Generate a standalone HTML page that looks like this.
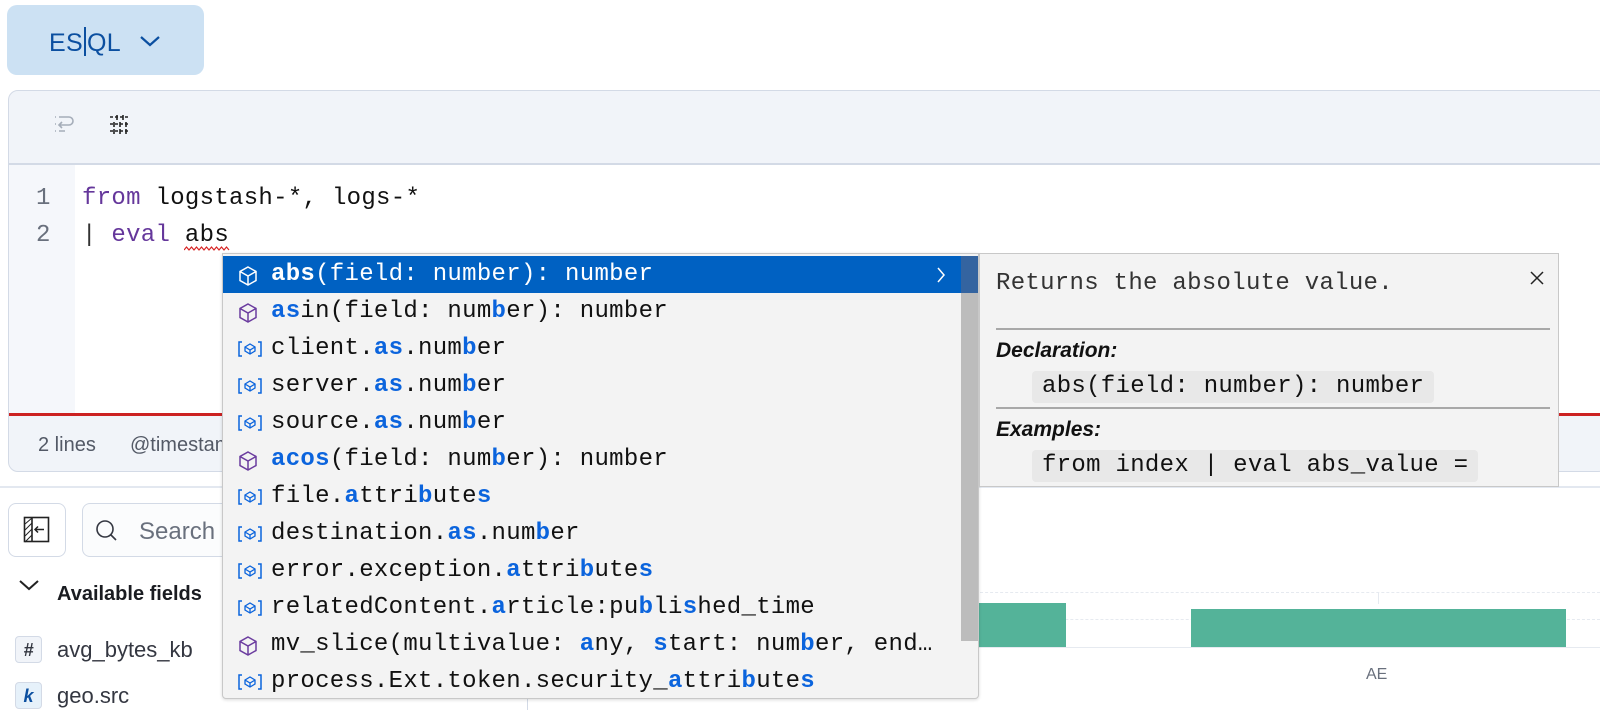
<!DOCTYPE html>
<html><head><meta charset="utf-8"><style>
*{box-sizing:border-box;margin:0;padding:0}
body{width:1600px;height:708px;overflow:hidden;background:#fff;font-family:"Liberation Sans",sans-serif;position:relative}
.abs{position:absolute}
.mono{font-family:"Liberation Mono",monospace;font-size:24px;letter-spacing:0.3px;white-space:pre}
.kw{color:#65379b}
.row{position:absolute;left:0;width:738px;height:37px;line-height:37px;color:#111}
.row .t{position:absolute;left:48px;top:0}
.row svg{position:absolute;left:14px;top:9px}
.m{color:#0b64dd;font-weight:bold}
.sel{background:#0061c2;color:#fff}
.sel .m{color:#fff}
</style></head><body>
<div class="abs" style="left:7px;top:5px;width:197px;height:70px;background:#cce1f3;border-radius:10px"></div>
<div class="abs" style="left:49px;top:27px;font-size:25px;color:#0b4fa0;letter-spacing:0.3px">ES<span style="display:inline-block;width:2px;height:29px;background:#0b4fa0;vertical-align:-5px;margin:0 1px"></span>QL</div>
<svg class="abs" style="left:138px;top:33px" width="24" height="16" viewBox="0 0 24 16"><path d="M3 4l9 8 9-8" stroke="#0b4fa0" stroke-width="2.2" fill="none"/></svg>

<div class="abs" style="left:8px;top:90px;width:1600px;height:382px;border:1px solid #d3dae6;border-radius:10px;background:#f1f4f9;overflow:hidden">
  <div class="abs" style="left:0;top:72px;width:1600px;height:2px;background:#d3dae6"></div>
  <div class="abs" style="left:0;top:74px;width:66px;height:248px;background:#f5f7fb"></div>
  <div class="abs" style="left:66px;top:74px;width:1600px;height:248px;background:#fff"></div>
  <div class="abs" style="left:0;top:322px;width:1600px;height:3px;background:#cc2222"></div>
</div>
<svg class="abs" style="left:53px;top:114px" width="24" height="20" viewBox="0 0 24 20"><path d="M2 3h1M2 10h1M2 17h1M6 3h10a4 4 0 0 1 0 8H7m2-3l-3 3 3 3M6 17h6" stroke="#a5adb9" stroke-width="1.6" fill="none"/></svg>
<svg class="abs" style="left:109px;top:114px" width="22" height="20" viewBox="0 0 22 20"><g stroke="#222" stroke-width="1.6"><path d="M1 3h20M1 10h20M1 17h20" stroke-dasharray="3 2"/><path d="M8 1v5M14 1v5M5 8v5M11 8v5M17 8v5M5 15v5M11 15v5M17 15v5"/></g></svg>
<div class="abs mono" style="left:36px;top:180px;color:#69707d;line-height:37px">1
2</div>
<div class="abs mono" style="left:82px;top:180px;line-height:37px;color:#111"><span class="kw">from</span> logstash-*, logs-*
<span style="color:#333">|</span> <span class="kw">eval</span> abs</div>
<svg class="abs" style="left:184px;top:245px" width="46" height="8" viewBox="0 0 46 8"><path d="M0 5 l2.5 -3 2.5 3 2.5 -3 2.5 3 2.5 -3 2.5 3 2.5 -3 2.5 3 2.5 -3 2.5 3 2.5 -3 2.5 3 2.5 -3 2.5 3 2.5 -3 2.5 3 2.5 -3 2.5 3" stroke="#d62222" stroke-width="1.2" fill="none"/></svg>
<div class="abs" style="left:38px;top:434px;font-size:20px;color:#535966">2 lines</div>
<div class="abs" style="left:130px;top:434px;font-size:20px;color:#535966">@timestamp</div>

<div class="abs" style="left:0;top:486px;width:1600px;height:2px;background:#e3e8f0"></div>
<div class="abs" style="left:8px;top:503px;width:58px;height:54px;border:1px solid #d3dae6;border-radius:8px;background:#fff"></div>
<svg class="abs" style="left:23px;top:516px" width="28" height="28" viewBox="0 0 28 28"><rect x="1.5" y="1.5" width="24" height="24" fill="none" stroke="#222" stroke-width="1.6"/><path d="M9 2v24" stroke="#222" stroke-width="1.6"/><path d="M2 8l7-6M2 14l7-7M2 20l7-7M2 26l7-7" stroke="#222" stroke-width="1"/><path d="M21 13.5h-9m3-3l-3 3 3 3" stroke="#222" stroke-width="1.5" fill="none"/></svg>
<div class="abs" style="left:82px;top:503px;width:200px;height:54px;border:1px solid #d3dae6;border-radius:8px;background:#fbfcfd"></div>
<svg class="abs" style="left:95px;top:519px" width="24" height="24" viewBox="0 0 24 24"><circle cx="10" cy="10" r="8" fill="none" stroke="#343741" stroke-width="1.6"/><path d="M16 16l5 5" stroke="#343741" stroke-width="1.6"/></svg>
<div class="abs" style="left:139px;top:518px;font-size:24px;color:#69707d">Search</div>
<svg class="abs" style="left:18px;top:578px" width="22" height="14" viewBox="0 0 22 14"><path d="M2 3l9 8 9-8" stroke="#222" stroke-width="2" fill="none"/></svg>
<div class="abs" style="left:57px;top:583px;font-size:20px;font-weight:bold;color:#1a1c21">Available fields</div>
<div class="abs" style="left:15px;top:636px;width:27px;height:27px;border:1px solid #d3dae6;border-radius:4px;background:#f1f4f9;font-size:18px;font-weight:bold;font-style:italic;color:#343741;text-align:center;line-height:26px">#</div>
<div class="abs" style="left:57px;top:637px;font-size:22px;color:#343741">avg_bytes_kb</div>
<div class="abs" style="left:15px;top:682px;width:27px;height:27px;border:1px solid #d3dae6;border-radius:4px;background:#e6f1fa;font-size:18px;font-weight:bold;font-style:italic;color:#0b4fa0;text-align:center;line-height:26px">k</div>
<div class="abs" style="left:57px;top:683px;font-size:22px;color:#343741">geo.src</div>
<div class="abs" style="left:527px;top:690px;width:1px;height:20px;background:#d3dae6"></div>

<div class="abs" style="left:960px;top:592px;width:640px;border-top:1px dashed #e6eaf0"></div>
<div class="abs" style="left:960px;top:619px;width:640px;border-top:1px dashed #e6eaf0"></div>
<div class="abs" style="left:960px;top:647px;width:640px;height:1px;background:#e6eaf0"></div>
<div class="abs" style="left:1378px;top:592px;width:1px;height:12px;background:#e6eaf0"></div>
<div class="abs" style="left:960px;top:603px;width:106px;height:44px;background:#54b399"></div>
<div class="abs" style="left:1191px;top:609px;width:375px;height:38px;background:#54b399"></div>
<div class="abs" style="left:1366px;top:666px;font-size:16px;color:#69707d">AE</div>

<div class="abs" style="left:222px;top:253px;width:757px;height:446px;background:#f3f3f3;border:1px solid #c8c8c8;border-radius:0 0 4px 4px;box-shadow:0 1px 3px rgba(0,0,0,.15);overflow:hidden">
  <div class="abs" style="left:738px;top:2px;width:18px;height:385px;background:#bcbcbc"></div>
  <div class="abs" style="left:738px;top:2px;width:18px;height:37px;background:#3464a0"></div>
  <div style="position:absolute;left:0;top:2px;width:738px" class="mono">
    <div class="row sel" style="top:0"><svg width="22" height="22" viewBox="0 0 22 22"><path d="M11 2l8 4.5v9L11 20l-8-4.5v-9zM3 6.5l8 4.5 8-4.5M11 11v9" fill="none" stroke="#fff" stroke-width="1.5"/></svg><span class="t"><span class="m">abs</span>(field: number): number</span><svg style="left:713px;top:11px" width="10" height="16" viewBox="0 0 10 16"><path d="M2 1l6 7-6 7" stroke="#fff" stroke-width="1.5" fill="none"/></svg></div>
    <div class="row" style="top:37px"><svg width="22" height="22" viewBox="0 0 22 22"><path d="M11 2l8 4.5v9L11 20l-8-4.5v-9zM3 6.5l8 4.5 8-4.5M11 11v9" fill="none" stroke="#6b3c9f" stroke-width="1.5"/></svg><span class="t"><span class="m">as</span>in(field: num<span class="m">b</span>er): number</span></div>
    <div class="row" style="top:74px"><svg width="26" height="20" viewBox="0 0 26 20"><path d="M5 3H2v14h3M21 3h3v14h-3" fill="none" stroke="#0b64dd" stroke-width="1.5"/><path d="M8 8l5-3 5 3v4l-5 3-5-3zM8 8l5 3 5-3M13 11v4" fill="none" stroke="#0b64dd" stroke-width="1.3"/></svg><span class="t">client.<span class="m">as</span>.num<span class="m">b</span>er</span></div>
    <div class="row" style="top:111px"><svg width="26" height="20" viewBox="0 0 26 20"><path d="M5 3H2v14h3M21 3h3v14h-3" fill="none" stroke="#0b64dd" stroke-width="1.5"/><path d="M8 8l5-3 5 3v4l-5 3-5-3zM8 8l5 3 5-3M13 11v4" fill="none" stroke="#0b64dd" stroke-width="1.3"/></svg><span class="t">server.<span class="m">as</span>.num<span class="m">b</span>er</span></div>
    <div class="row" style="top:148px"><svg width="26" height="20" viewBox="0 0 26 20"><path d="M5 3H2v14h3M21 3h3v14h-3" fill="none" stroke="#0b64dd" stroke-width="1.5"/><path d="M8 8l5-3 5 3v4l-5 3-5-3zM8 8l5 3 5-3M13 11v4" fill="none" stroke="#0b64dd" stroke-width="1.3"/></svg><span class="t">source.<span class="m">as</span>.num<span class="m">b</span>er</span></div>
    <div class="row" style="top:185px"><svg width="22" height="22" viewBox="0 0 22 22"><path d="M11 2l8 4.5v9L11 20l-8-4.5v-9zM3 6.5l8 4.5 8-4.5M11 11v9" fill="none" stroke="#6b3c9f" stroke-width="1.5"/></svg><span class="t"><span class="m">acos</span>(field: num<span class="m">b</span>er): number</span></div>
    <div class="row" style="top:222px"><svg width="26" height="20" viewBox="0 0 26 20"><path d="M5 3H2v14h3M21 3h3v14h-3" fill="none" stroke="#0b64dd" stroke-width="1.5"/><path d="M8 8l5-3 5 3v4l-5 3-5-3zM8 8l5 3 5-3M13 11v4" fill="none" stroke="#0b64dd" stroke-width="1.3"/></svg><span class="t">file.<span class="m">a</span>ttri<span class="m">b</span>ute<span class="m">s</span></span></div>
    <div class="row" style="top:259px"><svg width="26" height="20" viewBox="0 0 26 20"><path d="M5 3H2v14h3M21 3h3v14h-3" fill="none" stroke="#0b64dd" stroke-width="1.5"/><path d="M8 8l5-3 5 3v4l-5 3-5-3zM8 8l5 3 5-3M13 11v4" fill="none" stroke="#0b64dd" stroke-width="1.3"/></svg><span class="t">destination.<span class="m">as</span>.num<span class="m">b</span>er</span></div>
    <div class="row" style="top:296px"><svg width="26" height="20" viewBox="0 0 26 20"><path d="M5 3H2v14h3M21 3h3v14h-3" fill="none" stroke="#0b64dd" stroke-width="1.5"/><path d="M8 8l5-3 5 3v4l-5 3-5-3zM8 8l5 3 5-3M13 11v4" fill="none" stroke="#0b64dd" stroke-width="1.3"/></svg><span class="t">error.exception.<span class="m">a</span>ttri<span class="m">b</span>ute<span class="m">s</span></span></div>
    <div class="row" style="top:333px"><svg width="26" height="20" viewBox="0 0 26 20"><path d="M5 3H2v14h3M21 3h3v14h-3" fill="none" stroke="#0b64dd" stroke-width="1.5"/><path d="M8 8l5-3 5 3v4l-5 3-5-3zM8 8l5 3 5-3M13 11v4" fill="none" stroke="#0b64dd" stroke-width="1.3"/></svg><span class="t">relatedContent.<span class="m">a</span>rticle:pu<span class="m">b</span>li<span class="m">s</span>hed_time</span></div>
    <div class="row" style="top:370px"><svg width="22" height="22" viewBox="0 0 22 22"><path d="M11 2l8 4.5v9L11 20l-8-4.5v-9zM3 6.5l8 4.5 8-4.5M11 11v9" fill="none" stroke="#6b3c9f" stroke-width="1.5"/></svg><span class="t">mv_slice(multivalue: <span class="m">a</span>ny, <span class="m">s</span>tart: num<span class="m">b</span>er, end…</span></div>
    <div class="row" style="top:407px"><svg width="26" height="20" viewBox="0 0 26 20"><path d="M5 3H2v14h3M21 3h3v14h-3" fill="none" stroke="#0b64dd" stroke-width="1.5"/><path d="M8 8l5-3 5 3v4l-5 3-5-3zM8 8l5 3 5-3M13 11v4" fill="none" stroke="#0b64dd" stroke-width="1.3"/></svg><span class="t">process.Ext.token.security_<span class="m">a</span>ttri<span class="m">b</span>ute<span class="m">s</span></span></div>
  </div>
</div>

<div class="abs" style="left:979px;top:253px;width:580px;height:234px;background:#f3f3f3;border:1px solid #c8c8c8;overflow:hidden">
  <div class="abs mono" style="left:16px;top:16px;color:#333">Returns the absolute value.</div>
  <svg class="abs" style="left:550px;top:17px" width="14" height="14" viewBox="0 0 14 14"><path d="M1 1l12 12M13 1L1 13" stroke="#222" stroke-width="1.5"/></svg>
  <div class="abs" style="left:16px;top:74px;width:554px;height:2px;background:#a8a8a8"></div>
  <div class="abs" style="left:16px;top:85px;font-size:21px;font-weight:bold;font-style:italic;color:#111">Declaration:</div>
  <div class="abs mono" style="left:52px;top:117px;height:32px;line-height:32px;padding:0 10px;background:#e8e8e8;border-radius:4px;color:#111">abs(field: number): number</div>
  <div class="abs" style="left:16px;top:153px;width:554px;height:2px;background:#a8a8a8"></div>
  <div class="abs" style="left:16px;top:164px;font-size:21px;font-weight:bold;font-style:italic;color:#111">Examples:</div>
  <div class="abs mono" style="left:52px;top:196px;height:32px;line-height:32px;padding:0 10px;background:#e8e8e8;border-radius:4px;color:#111">from index | eval abs_value =</div>
</div>
</body></html>
